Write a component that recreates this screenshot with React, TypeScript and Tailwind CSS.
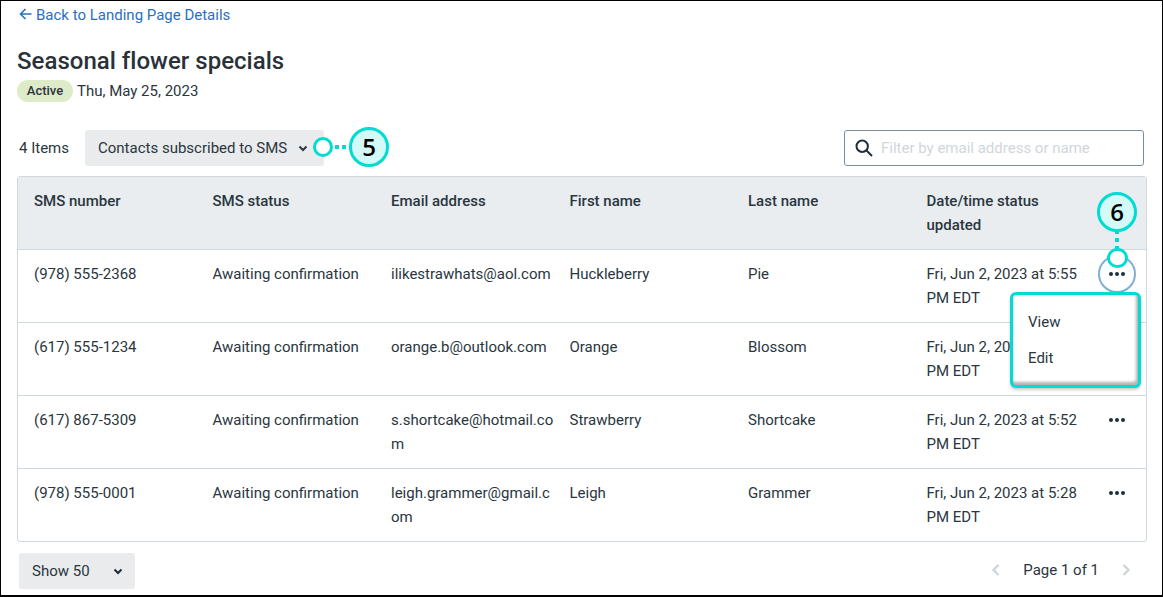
import React from "react";

const rows = [
  ["(978) 555-2368", "Awaiting confirmation", "ilikestrawhats@aol.com", "Huckleberry", "Pie", "Fri, Jun 2, 2023 at 5:55 PM EDT"],
  ["(617) 555-1234", "Awaiting confirmation", "orange.b@outlook.com", "Orange", "Blossom", "Fri, Jun 2, 2023 at 5:54 PM EDT"],
  ["(617) 867-5309", "Awaiting confirmation", "s.shortcake@hotmail.com", "Strawberry", "Shortcake", "Fri, Jun 2, 2023 at 5:52 PM EDT"],
  ["(978) 555-0001", "Awaiting confirmation", "leigh.grammer@gmail.com", "Leigh", "Grammer", "Fri, Jun 2, 2023 at 5:28 PM EDT"],
];
const heads = ["SMS number", "SMS status", "Email address", "First name", "Last name", "Date/time status updated"];

const Chevron = ({ className = "" }: { className?: string }) => (
  <svg width="10" height="7" viewBox="0 0 10 7" className={className} fill="none" stroke="currentColor" strokeWidth="2"><path d="M1.5 1.5 5 5l3.5-3.5" /></svg>
);

const Dots = () => (
  <svg width="18" height="4" viewBox="0 0 18 4" fill="#1f2d3a"><circle cx="3" cy="2" r="2" /><circle cx="9" cy="2" r="2" /><circle cx="15" cy="2" r="2" /></svg>
);

const Callout = ({ n, className }: { n: string; className: string }) => (
  <div className={"absolute w-[40px] h-[40px] rounded-full border-[3px] border-[#00dcd2] bg-[#d3faf7] flex items-center justify-center text-[24px] font-semibold text-black font-['Open_Sans',sans-serif] " + className}>{n}</div>
);

export default function App() {
  return (
    <div className="relative w-[1163px] h-[597px] overflow-hidden bg-white border border-black border-b-2 px-4 text-[15px] leading-6 text-[#2a3640] font-['Roboto',sans-serif]">
      <a className="flex items-center h-6 mt-[2px] text-[#2a6fc4] gap-[4px]">
        <svg width="13" height="12" viewBox="0 0 13 12" fill="none" stroke="currentColor" strokeWidth="1.6" className="-mt-[3px] ml-[2px]"><path d="M12.5 6H1.5M6.5 1 1.5 6l5 5" /></svg>
        Back to Landing Page Details
      </a>
      <h1 className="mt-[18px] text-[24px] leading-8 font-medium text-[#2a3138] tracking-[0.02px]">Seasonal flower specials</h1>
      <div className="mt-[3px] flex items-center gap-[4px] h-[22px]">
        <span className="h-[22px] w-[56px] rounded-full bg-[#deebc8] flex items-center justify-center text-[13px] font-medium">Active</span>
        <span>Thu, May 25, 2023</span>
      </div>

      <div className="mt-[28px] h-[36px] flex items-center">
        <span className="ml-[2px] w-[66px]">4 Items</span>
        <div className="w-[239px] h-[36px] rounded-[3px] bg-[#e9ebed] flex items-center pl-[13px] pr-[16px] justify-between">
          <span>Contacts subscribed to SMS</span>
          <Chevron />
        </div>
        <div className="ml-auto mr-[2px] w-[300px] h-[36px] rounded-[3px] border border-[#7b8e99] flex items-center pl-[10px] gap-[8px]">
          <svg width="18" height="18" viewBox="0 0 18 18" fill="none" stroke="#1f2d3a" strokeWidth="2"><circle cx="7.2" cy="7.2" r="5.7" /><path d="m11.5 11.5 5.5 5.5" /></svg>
          <span className="text-[#d0d7dc]">Filter by email address or name</span>
        </div>
      </div>

      <div className="mt-[10px] w-[1130px] rounded-[3px] border border-[#cfd8dd]">
        <div className="grid grid-cols-[178.5px_178.5px_178.5px_178.5px_178.5px_178.5px_1fr] bg-[#e9edf0] border-b border-[#cfd8dd] font-medium">
          {heads.map((h) => (
            <div key={h} className="pl-4 pr-2 py-3 h-[72px]">{h}</div>
          ))}
          <div />
        </div>
        {rows.map((r, i) => (
          <div key={i} className={"grid grid-cols-[178.5px_178.5px_178.5px_178.5px_178.5px_178.5px_1fr] " + (i < 3 ? "h-[73px] border-b border-[#cfd8dd]" : "h-[72px]")}>
            {r.map((c, j) => (
              <div key={j} className={"pl-4 py-3 [overflow-wrap:anywhere] " + (j === 5 ? "pr-1" : "pr-0")}>{c}</div>
            ))}
            <div className="flex justify-center pt-[12px] pr-[2px]">
              <div className={"w-[38px] h-[38px] -mt-[7px] rounded-full flex items-center justify-center " + (i === 0 ? "border-2 border-[#7fb0d4]" : "")}>
                <Dots />
              </div>
            </div>
          </div>
        ))}
      </div>

      <div className="mt-[11px] h-[36px] flex items-center">
        <div className="ml-[2px] w-[116px] h-[36px] rounded-[3px] bg-[#e9ebed] flex items-center justify-between pl-[13px] pr-[12px]">
          <span>Show 50</span>
          <Chevron className="text-[#1f2d3a]" />
        </div>
        <div className="ml-auto mr-[16px] -mt-[2px] flex items-center gap-[23px]">
          <svg width="8" height="12" viewBox="0 0 8 12" fill="none" stroke="#ced6db" strokeWidth="2.4"><path d="M6.5 1 1.5 6l5 5" /></svg>
          <span>Page 1 of 1</span>
          <svg width="8" height="12" viewBox="0 0 8 12" fill="none" stroke="#ced6db" strokeWidth="2.4"><path d="m1.5 1 5 5-5 5" /></svg>
        </div>
      </div>

      {/* dropdown menu inside its highlight frame */}
      <div className="absolute left-[1009px] top-[291px] w-[131px] h-[96px] rounded-[6px] border-[3px] border-[#00dcd2] bg-white shadow-[0_2px_3px_rgba(0,0,0,0.2)]">
        <div className="w-full h-full rounded-[3px] shadow-[inset_-2px_-3px_3px_rgba(0,0,0,0.3),inset_1px_1px_2px_rgba(0,0,0,0.1)] pl-[15px] pt-[15px]">
          <div className="h-9 leading-6">View</div>
          <div className="leading-6">Edit</div>
        </div>
      </div>

      {/* callouts */}
      <div className="absolute left-[312px] top-[136px] w-[20px] h-[20px] rounded-full border-[3px] border-[#00dcd2] bg-white" />
      <svg className="absolute left-[332px] top-[144px]" width="18" height="4" viewBox="0 0 18 4"><path d="M2 2H17" stroke="#00dcd2" strokeWidth="4" strokeDasharray="4 3" /></svg>
      <Callout n="5" className="left-[348px] top-[126px]" />
      <div className="absolute left-[1106px] top-[247px] w-[21px] h-[20px] rounded-full border-[3px] border-[#00dcd2] bg-white" />
      <svg className="absolute left-[1114px] top-[229px]" width="4" height="19" viewBox="0 0 4 19"><path d="M2 0V19" stroke="#00dcd2" strokeWidth="4" strokeDasharray="4 4" /></svg>
      <Callout n="6" className="left-[1096px] top-[191px]" />
    </div>
  );
}
